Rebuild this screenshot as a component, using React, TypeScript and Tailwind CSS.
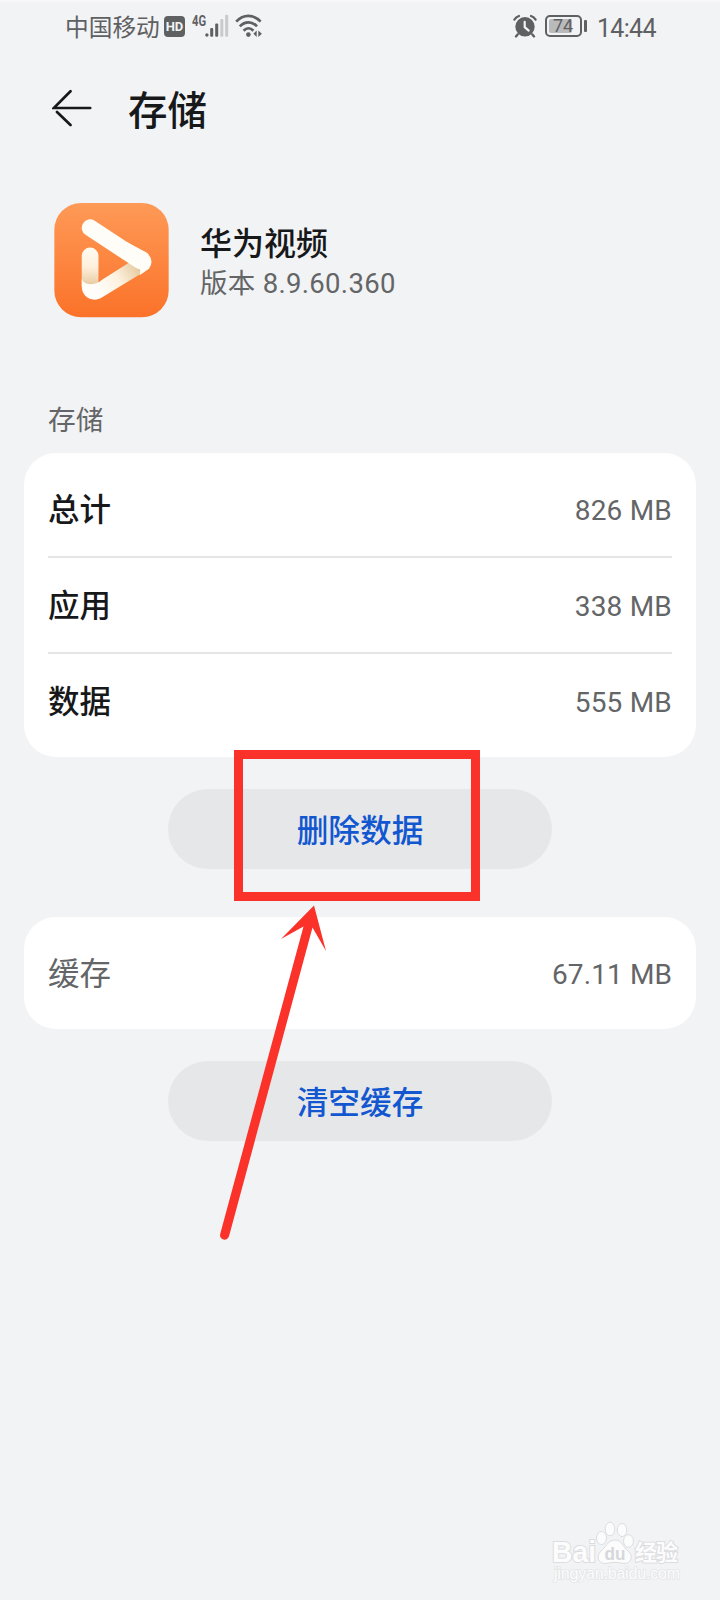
import React from "react";

interface StorageRow {
    label: string;
    value: string;
}

const storageRows: StorageRow[] = [
    { label: "总计", value: "826 MB" },
    { label: "应用", value: "338 MB" },
    { label: "数据", value: "555 MB" },
];

const SignalIcon = () => (
    <svg width="24" height="24" viewBox="0 0 24 24" fill="#5f6062">
        <circle cx="1.9" cy="21" r="1.7" />
        <rect x="5.2" y="14" width="3" height="8.7" rx="1" />
        <rect x="10.2" y="9.5" width="3" height="13.2" rx="1" />
        <rect x="15.3" y="5" width="3" height="17.7" rx="1" fill="#c9cacc" />
        <rect x="20.2" y="0.7" width="3" height="22" rx="1" fill="#c9cacc" />
    </svg>
);

const WifiIcon = () => (
    <svg width="28" height="24" viewBox="0 0 28 24" fill="none" stroke="#5f6062" strokeWidth="2.7">
        <path d="M1.2 7.6C8.4 0 18.4 0 25.6 7.6" />
        <path d="M4.8 12.4C10 7 17 7 22 12.4" />
        <path d="M8.6 16.8C11.8 13.4 15.2 13.4 18.4 16.8" />
        <circle cx="13.4" cy="20.6" r="2.3" fill="#5f6062" stroke="none" />
        <path d="M21.7 16.4v6.6l-3.3-3.3zM23.3 16.4v6.6l3.6-3.3z" fill="#5f6062" stroke="none" />
    </svg>
);

const AlarmIcon = () => (
    <svg width="24" height="24" viewBox="0 0 24 24" fill="none" stroke="#5f6062" strokeLinecap="round">
        <circle cx="12" cy="12.8" r="9.7" fill="#5f6062" stroke="none" />
        <path d="M1.4 5.6Q3 3 6 2M22.6 5.6Q21 3 18 2" strokeWidth="2.2" />
        <path d="M4.6 20.5L3 22.4M19.4 20.5L21 22.4" strokeWidth="2.4" />
        <path d="M11.7 7.8v5.4l4 3.4" stroke="#f2f3f5" strokeWidth="2.2" />
    </svg>
);

const StatusBar = () => (
    <div className="flex h-[54px] items-start border-t-2 border-[#f8f8fa] pl-[65px] pr-[63px] pt-3 text-[#5f6062]">
        <span className="mt-px w-[99px] whitespace-nowrap text-[23.7px] leading-[27px]">中国移动</span>
        <span className="mt-[2px] flex h-[21px] w-[21px] items-center justify-center rounded-[4px] bg-[#5f6062] text-[13px] font-bold leading-none text-[#f2f3f5]">
            HD
        </span>
        <span className="ml-[7px] w-[13px] origin-left scale-x-[0.8] text-[14px] font-bold leading-[14px]">4G</span>
        <SignalIcon />
        <span className="ml-[6px]">
            <WifiIcon />
        </span>
        <span className="ml-auto">
            <AlarmIcon />
        </span>
        <span className="ml-[8px] mt-[1px] flex h-[22px] w-[37px] items-center rounded-[5px] border-2 border-[#5f6062] p-[2px]">
            <span className="flex h-[14px] w-[23px] items-center justify-center rounded-[2px] bg-[#b9babb]">
                <span className="ml-[5px] text-[18px] leading-none">74</span>
            </span>
        </span>
        <span className="ml-[2px] mt-[6px] h-[12px] w-[3px] rounded-[1px] bg-[#5f6062]" />
        <span className="ml-[10px] mt-px w-[60px] whitespace-nowrap text-[25px] leading-[28px] tracking-[-0.7px]">14:44</span>
    </div>
);

const VideoAppIcon = () => (
    <svg className="shrink-0" width="115" height="115" viewBox="44 38 344 344">
        <defs>
            <linearGradient id="tile" x1="0" y1="0" x2="0" y2="1">
                <stop offset="0%" stopColor="#fe9a57" />
                <stop offset="100%" stopColor="#fb7229" />
            </linearGradient>
            <linearGradient id="stem" x1="0" y1="0" x2="0" y2="1">
                <stop offset="0%" stopColor="#fffaf0" />
                <stop offset="50%" stopColor="#fff0dc" />
                <stop offset="100%" stopColor="#e8c9a0" />
            </linearGradient>
            <linearGradient id="fold" gradientUnits="userSpaceOnUse" x1="305" y1="225" x2="180" y2="300">
                <stop offset="0%" stopColor="#e2c596" />
                <stop offset="55%" stopColor="#fdf1df" />
                <stop offset="100%" stopColor="#fffdf9" />
            </linearGradient>
        </defs>
        <rect x="45" y="38" width="342" height="342" rx="80" fill="url(#tile)" />
        <path d="M127 196a25 25 0 0 1 50 0v80l-20 10h-30z" fill="url(#stem)" />
        <path d="M127 264q4 16 24 17q22 0 38-14L282 208L316 242L187 321C160 337 127 320 127 288z" fill="url(#fold)" />
        <path d="M152 112L302 211" stroke="#fffdf8" strokeWidth="50" strokeLinecap="round" />
        <path d="M262 155L322 187Q346 210 328 235L300 254Q308 226 282 208L240 178z" fill="#fffdf8" />
    </svg>
);

const ActionButton = ({ label }: { label: string }) => (
    <button className="mx-auto flex h-20 w-96 items-center justify-center rounded-full bg-[#e6e7e9] pt-[6px] text-[31.7px] font-medium leading-10 text-[#1257d0]">
        {label}
    </button>
);

// Red frame around the delete button and the arrow pointing up at it
const Annotation = () => (
    <>
        <div className="pointer-events-none absolute left-[234px] top-[750px] h-[151px] w-[246px] border-[9px] border-[#fb3229]" />
        <svg className="pointer-events-none absolute left-[210px] top-[900px]" width="130" height="345" viewBox="210 900 130 345">
            <path
                d="M314 905.5L281 939L303.5 926.5L220.2 1234A4.5 4.5 0 0 0 229 1236.3L312.5 927.5L326 951z"
                fill="#fb3229"
            />
        </svg>
    </>
);

const Watermark = () => (
    <svg
        className="pointer-events-none absolute left-[545px] top-[1515px]"
        width="150"
        height="75"
        viewBox="545 1515 150 75"
        fill="#fcfcfd"
        stroke="#dcdde0"
        strokeWidth="1"
        fontFamily="Liberation Sans, Noto Sans CJK SC, sans-serif"
    >
        <g fontWeight="bold" paintOrder="stroke" strokeWidth="2">
            <text x="552" y="1562" fontSize="29" textLength="44" lengthAdjust="spacingAndGlyphs">Bai</text>
            <text x="635" y="1560" fontSize="22" textLength="43">经验</text>
        </g>
        <ellipse cx="601.5" cy="1538" rx="5" ry="6.5" />
        <ellipse cx="610" cy="1529" rx="4.8" ry="6.8" />
        <ellipse cx="622" cy="1530" rx="4.8" ry="6.5" />
        <ellipse cx="628.5" cy="1541" rx="5" ry="6.3" />
        <path d="M615 1540C608 1540 606 1547 601 1551C595 1557 599 1564 606 1563.5C612 1562 618 1562 624 1563.5C631 1564 634 1556 628 1551C623 1547 622 1540 615 1540z" />
        <text x="604.5" y="1560" fontSize="18" fontWeight="bold" fill="#d6d7da" stroke="none" textLength="21" lengthAdjust="spacingAndGlyphs">du</text>
        <text x="554" y="1579" fontSize="16" textLength="126" strokeWidth="1.6" stroke="#e4e5e8" paintOrder="stroke">
            jingyan.baidu.com
        </text>
    </svg>
);

export default function App() {
    return (
        <div className="relative h-[1600px] w-[720px] overflow-hidden bg-[#f2f3f5] font-['Roboto','Noto_Sans_CJK_SC',sans-serif]">
            <StatusBar />

            {/* Header */}
            <header className="flex h-[108px] items-center pl-[52px] text-[#17181a]">
                <svg width="40" height="38" viewBox="0 0 40 38" fill="none" stroke="currentColor" strokeWidth="2.7" strokeLinecap="round">
                    <path d="M38.2 19H1.8L18.5 2.2M5 23L18.5 36" />
                </svg>
                <h1 className="ml-[36px] pt-[8px] text-[39.5px] font-medium leading-[52px]">存储</h1>
            </header>

            {/* App info */}
            <section className="mt-[40px] flex h-[116px] items-center pl-[54px]">
                <VideoAppIcon />
                <div className="ml-[31px] pt-2">
                    <p className="text-[32px] font-medium leading-[40px] text-[#17181a]">华为视频</p>
                    <p className="text-[27.5px] leading-[40px] tracking-[0.3px] text-[#646567]">版本 8.9.60.360</p>
                </div>
            </section>

            {/* Storage usage */}
            <h2 className="mt-[83px] pl-12 text-[27.7px] leading-[40px] text-[#646567]">存储</h2>
            <section className="mx-6 mt-[12px] rounded-[32px] bg-white px-6 pb-[7px] pt-[9px]">
                {storageRows.map((row, i) => (
                    <div
                        key={row.label}
                        className={`flex h-24 items-center justify-between ${i < storageRows.length - 1 ? "border-b-2 border-[#e6e6e7] pt-[4px]" : "pt-[2px]"}`}
                    >
                        <span className="text-[31.5px] font-medium text-[#17181a]">{row.label}</span>
                        <span className="text-[28px] tracking-[0.2px] text-[#646567]">{row.value}</span>
                    </div>
                ))}
            </section>
            <div className="mt-8">
                <ActionButton label="删除数据" />
            </div>

            {/* Cache */}
            <section className="mx-6 mt-12 flex h-28 items-center justify-between rounded-[32px] bg-white px-6 pt-[4px] text-[#646567]">
                <span className="text-[31.5px]">缓存</span>
                <span className="text-[28px] tracking-[0.1px]">67.11 MB</span>
            </section>
            <div className="mt-8">
                <ActionButton label="清空缓存" />
            </div>

            <Annotation />
            <Watermark />
        </div>
    );
}
